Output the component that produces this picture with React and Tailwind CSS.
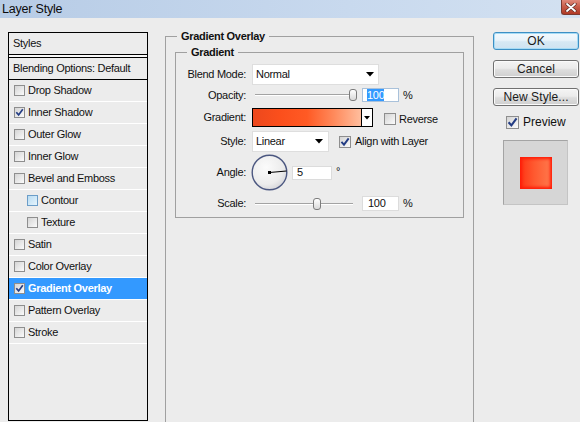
import React from "react";

function Check({ checked = false, hover = false, size = 11 }) {
  const cls = hover
    ? "border-[#6b9dc8] bg-[linear-gradient(135deg,#b9dcf3,#e6f4fc)]"
    : "border-[#8e8e8e] bg-[linear-gradient(135deg,#d4d4d4,#fbfbfb)]";
  return (
    <span
      className={`flex shrink-0 items-center justify-center border ${cls}`}
      style={{ width: size, height: size }}
    >
      {checked && (
        <svg width={size - 2} height={size - 2} viewBox="0 0 9 9">
          <path d="M1.3 4.3 L3.6 6.9 L7.8 1.2" fill="none" stroke="#243d84" strokeWidth="1.7" />
        </svg>
      )}
    </span>
  );
}

function Arrow() {
  return (
    <svg width="8" height="5" viewBox="0 0 8 5">
      <path d="M0 0 H8 L4 4.5 Z" fill="#000" />
    </svg>
  );
}

function Slider({ pos }) {
  return (
    <div className="relative ml-[9px] flex h-[12px] w-[98px] items-center">
      <div className="h-[2px] w-full border-t border-[#a3a3a3] border-b border-b-white" />
      <div
        className="absolute top-0 h-[12px] w-[8px] rounded-[3px] border border-[#7c7c7c] bg-[linear-gradient(#ffffff,#d9d9d9)]"
        style={{ left: pos }}
      />
    </div>
  );
}

const layers = [
  { t: "Drop Shadow" },
  { t: "Inner Shadow", c: true },
  { t: "Outer Glow" },
  { t: "Inner Glow" },
  { t: "Bevel and Emboss" },
  { t: "Contour", i: true, h: true },
  { t: "Texture", i: true },
  { t: "Satin" },
  { t: "Color Overlay" },
  { t: "Gradient Overlay", c: true, s: true },
  { t: "Pattern Overlay" },
  { t: "Stroke" },
];

function Label({ children }) {
  return <span className="w-[70px] shrink-0 text-right">{children}</span>;
}

function Button({ children, focus }) {
  return (
    <div
      className={`flex h-[18px] w-[86px] items-center justify-center rounded-[3px] border text-[12px] tracking-[0.1px] text-[#1a1a1a] ${
        focus
          ? "border-[#3d8fc4] bg-[linear-gradient(#f3f9fd_0%,#e9f3fa_45%,#d6e8f4_55%,#cfe3f1_100%)] shadow-[inset_0_0_0_1px_#a6dbf5]"
          : "border-[#707070] bg-[linear-gradient(#f4f4f4_0%,#ebebeb_45%,#dddddd_55%,#cfcfcf_100%)] shadow-[inset_0_0_0_1px_#fbfbfb]"
      }`}
    >
      {children}
    </div>
  );
}

export default function App() {
  return (
    <div className="flex h-[422px] w-[580px] flex-col overflow-hidden bg-[#ececec] font-['Liberation_Sans',Arial,sans-serif] text-[11px] tracking-[-0.3px] text-[#111]">
      {/* Title bar */}
      <div className="flex h-[18px] shrink-0 items-start justify-between bg-[linear-gradient(to_right,#b7cce6,#c8d9ee_60%,#d3e1f1)]">
        <span className="pl-[2px] pt-[2px] text-[12.5px] leading-[14px] tracking-[-0.2px] text-[#0c0c0c]">Layer Style</span>
        <div className="flex h-[15px] w-[19px] items-center justify-center rounded-bl-[3px] border-b border-l border-[#7a3a30] bg-[linear-gradient(#e08a7a,#c75a46_50%,#b03a26)]">
          <svg width="12" height="9" viewBox="0 0 12 9">
            <path d="M2 1 L10 8 M10 1 L2 8" stroke="#5a2a22" strokeWidth="3.2" strokeLinecap="round" />
            <path d="M2 1 L10 8 M10 1 L2 8" stroke="#ffffff" strokeWidth="1.8" strokeLinecap="round" />
          </svg>
        </div>
      </div>

      <div className="flex min-h-0 flex-1">
        {/* Left styles list */}
        <div className="ml-[8px] mt-[14px] h-[389px] w-[140px] shrink-0 border border-black">
          <div className="flex h-[22px] items-center border-b border-black pl-[4px]">Styles</div>
          <div className="h-[2px] bg-[#f8f8f8]" />
          <div className="flex h-[23px] items-center border-y border-black pl-[4px]">Blending Options: Default</div>
          {layers.map((l) => (
            <div
              key={l.t}
              className={`flex h-[22px] items-center gap-[3px] border-b border-white ${
                l.i ? "pl-[18px]" : "pl-[5px]"
              } ${l.s ? "bg-[#3399ff] font-bold text-white" : ""}`}
            >
              <Check checked={l.c} hover={l.h} />
              <span>{l.t}</span>
            </div>
          ))}
        </div>

        {/* Middle fieldset */}
        <fieldset className="ml-[17px] mt-[11px] h-[420px] w-[309px] shrink-0 border border-[#a0a0a0] px-[9px]">
          <legend className="ml-[2px] px-[4px] font-bold leading-[14px]">Gradient Overlay</legend>
          <fieldset className="mt-[2px] w-[289px] border border-[#a0a0a0] pb-[6px]">
            <legend className="ml-[11px] px-[4px] font-bold leading-[14px]">Gradient</legend>

            <div className="mt-[5px] flex h-[21px] items-center">
              <Label>Blend Mode:</Label>
              <div className="ml-[6px] flex h-[21px] w-[127px] items-center justify-between border border-[#dedede] bg-white pl-[3px] pr-[4px]">
                <span>Normal</span>
                <Arrow />
              </div>
            </div>

            <div className="mt-[3px] flex h-[14px] items-center">
              <Label>Opacity:</Label>
              <Slider pos={94} />
              <div className="ml-[9px] flex h-[14px] w-[37px] items-center border border-[#a9c1da] bg-white pl-[4px]">
                <span className="bg-[#3399ff] leading-[12px] text-white">100</span>
              </div>
              <span className="ml-[4px]">%</span>
            </div>

            <div className="mt-[6px] flex h-[19px] items-center">
              <Label>Gradient:</Label>
              <div className="ml-[6px] flex h-[19px] w-[121px] border border-black">
                <div className="h-full flex-1 bg-[linear-gradient(to_right,#ec481d_0%,#fb4f1c_25%,#ff5a24_50%,#ff8a5c_75%,#ffbe9e_100%)]" />
                <div className="flex h-full w-[11px] items-center justify-center border-l border-black bg-white">
                  <svg width="6" height="4" viewBox="0 0 6 4">
                    <path d="M0 0 H6 L3 3.5 Z" fill="#000" />
                  </svg>
                </div>
              </div>
              <div className="ml-[11px] flex items-center gap-[3px] self-start pt-[3px]">
                <Check size={12} />
                <span>Reverse</span>
              </div>
            </div>

            <div className="mt-[4px] flex h-[21px] items-center">
              <Label>Style:</Label>
              <div className="ml-[6px] flex h-[21px] w-[77px] items-center justify-between border border-[#dedede] bg-white pl-[3px] pr-[5px]">
                <span>Linear</span>
                <Arrow />
              </div>
              <div className="ml-[10px] flex items-center gap-[4px]">
                <Check checked size={12} />
                <span>Align with Layer</span>
              </div>
            </div>

            <div className="mt-[3px] flex h-[35px] items-center">
              <Label>Angle:</Label>
              <svg className="ml-[5px]" width="37" height="37" viewBox="0 0 37 37">
                <defs>
                  <radialGradient id="dial" cx="40%" cy="35%" r="70%">
                    <stop offset="0%" stopColor="#fbfbfb" />
                    <stop offset="70%" stopColor="#ececec" />
                    <stop offset="100%" stopColor="#d4d4d8" />
                  </radialGradient>
                </defs>
                <circle cx="18.5" cy="18.5" r="17.3" fill="url(#dial)" stroke="#4b5780" strokeWidth="1.4" />
                <line x1="18.5" y1="18.5" x2="35.5" y2="17" stroke="#000" strokeWidth="1.1" />
                <rect x="17" y="17" width="3" height="3" fill="#000" />
              </svg>
              <div className="ml-[4px] flex h-[14px] w-[40px] items-center border border-[#dcdcdc] bg-white pl-[4px]">5</div>
              <span className="ml-[4px] self-start pt-[11px] leading-none">°</span>
            </div>

            <div className="mt-[6px] flex h-[15px] items-center">
              <Label>Scale:</Label>
              <Slider pos={58} />
              <div className="ml-[9px] flex h-[15px] w-[37px] items-center border border-[#dcdcdc] bg-white pl-[5px]">100</div>
              <span className="ml-[4px]">%</span>
            </div>
          </fieldset>
        </fieldset>

        {/* Right buttons */}
        <div className="ml-[19px] mt-[14px] flex w-[86px] shrink-0 flex-col">
          <Button focus>OK</Button>
          <div className="mt-[10px]">
            <Button>Cancel</Button>
          </div>
          <div className="mt-[10px]">
            <Button>New Style...</Button>
          </div>
          <div className="ml-[13px] mt-[7px] flex items-center gap-[4px] text-[12px] tracking-[0px]">
            <Check checked size={13} />
            <span>Preview</span>
          </div>
          <div className="ml-[10px] mt-[9px] flex h-[65px] w-[65px] items-center justify-center border border-[#a4a4a4] border-b-[#c4c4c4] border-r-[#c4c4c4] bg-[#d6d6d6]">
            <div className="h-[32px] w-[32px] bg-[linear-gradient(to_right,#ff3414,#ff5a30_45%,#ff7a4e)] shadow-[inset_0_0_3px_2px_#ff1c08]" />
          </div>
        </div>
      </div>
    </div>
  );
}
